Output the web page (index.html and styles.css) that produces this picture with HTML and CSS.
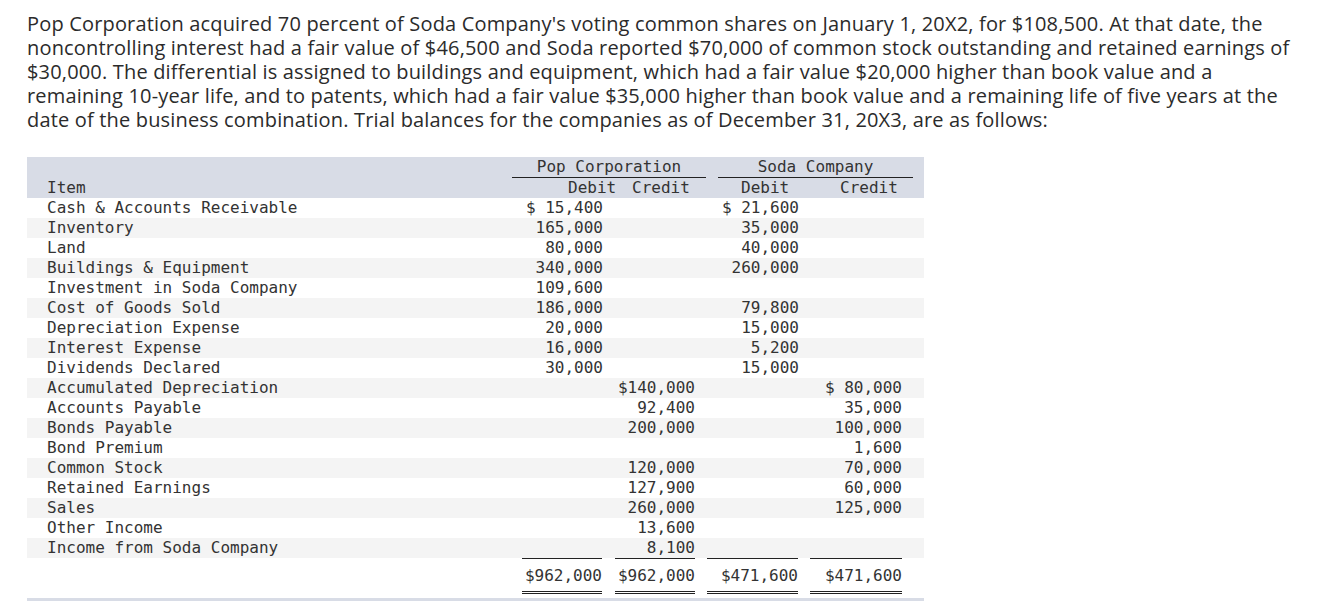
FILE: index.html
```html
<!DOCTYPE html>
<html>
<head>
<meta charset="utf-8">
<link rel="stylesheet" href="styles.css">
</head>
<body>
<div class="page">
  <p class="intro">Pop Corporation acquired 70 percent of Soda Company's voting common shares on January 1, 20X2, for $108,500. At that date, the noncontrolling interest had a fair value of $46,500 and Soda reported $70,000 of common stock outstanding and retained earnings of $30,000. The differential is assigned to buildings and equipment, which had a fair value $20,000 higher than book value and a remaining 10-year life, and to patents, which had a fair value $35,000 higher than book value and a remaining life of five years at the date of the business combination. Trial balances for the companies as of December 31, 20X3, are as follows:</p>

  <table class="tb">
    <colgroup>
      <col class="c-item"><col class="c-pd"><col class="c-pc"><col class="c-sd"><col class="c-sc">
    </colgroup>
    <thead>
      <tr class="h1">
        <th></th>
        <th colspan="2"><div class="grp grp-pop">Pop Corporation</div></th>
        <th colspan="2"><div class="grp grp-soda">Soda Company</div></th>
      </tr>
      <tr class="h2">
        <th class="item">Item</th>
        <th class="hd hd-pd">Debit</th>
        <th class="hd hd-pc">Credit</th>
        <th class="hd hd-sd">Debit</th>
        <th class="hd hd-sc">Credit</th>
      </tr>
    </thead>
    <tbody>
      <tr><td class="item">Cash &amp; Accounts Receivable</td><td class="pd">$ 15,400</td><td class="pc"></td><td class="sd">$ 21,600</td><td class="sc"></td></tr>
      <tr><td class="item">Inventory</td><td class="pd">165,000</td><td class="pc"></td><td class="sd">35,000</td><td class="sc"></td></tr>
      <tr><td class="item">Land</td><td class="pd">80,000</td><td class="pc"></td><td class="sd">40,000</td><td class="sc"></td></tr>
      <tr><td class="item">Buildings &amp; Equipment</td><td class="pd">340,000</td><td class="pc"></td><td class="sd">260,000</td><td class="sc"></td></tr>
      <tr><td class="item">Investment in Soda Company</td><td class="pd">109,600</td><td class="pc"></td><td class="sd"></td><td class="sc"></td></tr>
      <tr><td class="item">Cost of Goods Sold</td><td class="pd">186,000</td><td class="pc"></td><td class="sd">79,800</td><td class="sc"></td></tr>
      <tr><td class="item">Depreciation Expense</td><td class="pd">20,000</td><td class="pc"></td><td class="sd">15,000</td><td class="sc"></td></tr>
      <tr><td class="item">Interest Expense</td><td class="pd">16,000</td><td class="pc"></td><td class="sd">5,200</td><td class="sc"></td></tr>
      <tr><td class="item">Dividends Declared</td><td class="pd">30,000</td><td class="pc"></td><td class="sd">15,000</td><td class="sc"></td></tr>
      <tr><td class="item">Accumulated Depreciation</td><td class="pd"></td><td class="pc">$140,000</td><td class="sd"></td><td class="sc">$ 80,000</td></tr>
      <tr><td class="item">Accounts Payable</td><td class="pd"></td><td class="pc">92,400</td><td class="sd"></td><td class="sc">35,000</td></tr>
      <tr><td class="item">Bonds Payable</td><td class="pd"></td><td class="pc">200,000</td><td class="sd"></td><td class="sc">100,000</td></tr>
      <tr><td class="item">Bond Premium</td><td class="pd"></td><td class="pc"></td><td class="sd"></td><td class="sc">1,600</td></tr>
      <tr><td class="item">Common Stock</td><td class="pd"></td><td class="pc">120,000</td><td class="sd"></td><td class="sc">70,000</td></tr>
      <tr><td class="item">Retained Earnings</td><td class="pd"></td><td class="pc">127,900</td><td class="sd"></td><td class="sc">60,000</td></tr>
      <tr><td class="item">Sales</td><td class="pd"></td><td class="pc">260,000</td><td class="sd"></td><td class="sc">125,000</td></tr>
      <tr><td class="item">Other Income</td><td class="pd"></td><td class="pc">13,600</td><td class="sd"></td><td class="sc"></td></tr>
      <tr><td class="item">Income from Soda Company</td><td class="pd"></td><td class="pc">8,100</td><td class="sd"></td><td class="sc"></td></tr>
    </tbody>
    <tfoot>
      <tr>
        <td></td>
        <td><span class="tot tot-pd">$962,000</span></td>
        <td><span class="tot tot-pc">$962,000</span></td>
        <td><span class="tot tot-sd">$471,600</span></td>
        <td><span class="tot tot-sc">$471,600</span></td>
      </tr>
    </tfoot>
  </table>
</div>
</body>
</html>
```

FILE: styles.css
```css
html, body {
  margin: 0;
  padding: 0;
  background: #ffffff;
}

.page {
  padding: 12px 0 0 27px;
  width: 1276px;
}

.intro {
  margin: 0;
  font-family: "Open Sans", Lato, sans-serif;
  font-size: 20px;
  letter-spacing: 0.17px;
  line-height: 24px;
  color: #2b2b2b;
}

.tb {
  margin-top: 25px;
  border-collapse: collapse;
  border-spacing: 0;
  table-layout: fixed;
  width: 897px;
  font-family: "DejaVu Sans Mono", "Liberation Mono", monospace;
  font-size: 16px;
  color: #333333;
}

.c-item { width: 484px; }
.c-pd { width: 100px; }
.c-pc { width: 96px; }
.c-sd { width: 100px; }
.c-sc { width: 117px; }

.tb th, .tb td {
  padding: 0;
  font-weight: normal;
  line-height: 20px;
  white-space: nowrap;
}

.tb thead tr {
  background: #d8dce6;
}

.tb thead th {
  text-align: left;
}

.grp {
  text-align: center;
  border-bottom: 1px solid #222222;
  line-height: 20px;
}

.grp-pop {
  margin: 0 1px;
}

.grp-soda {
  margin: 0 11px;
}

.item {
  padding-left: 20px !important;
  text-align: left;
}

.hd-pd { padding-left: 57px !important; }
.hd-pc { padding-left: 21px !important; }
.hd-sd { padding-left: 34px !important; }
.hd-sc { padding-left: 33px !important; }

.tb tbody td {
  height: 20px;
}

.tb tbody tr:nth-child(even) {
  background: #f4f4f4;
}

.pd, .pc, .sd, .sc {
  text-align: right;
}

.tb tbody .pd { padding-right: 8px; }
.tb tbody .pc { padding-right: 12px; }
.tb tbody .sd { padding-right: 8px; }
.tb tbody .sc { padding-right: 22px; }

.tb tfoot td {
  vertical-align: top;
  padding-bottom: 4px;
  border-bottom: 3px solid #d8dce6;
}

.tot {
  display: block;
  text-align: right;
  border-top: 1px solid #222222;
  border-bottom: 3px double #222222;
  padding-top: 7px;
  padding-bottom: 5px;
  line-height: 20px;
}

.tot-pd { margin: 0 9px 0 11px; }
.tot-pc { margin: 0 12px 0 4px; }
.tot-sd { margin: 0 9px 0 0; }
.tot-sc { margin: 0 22px 0 3px; }
```
